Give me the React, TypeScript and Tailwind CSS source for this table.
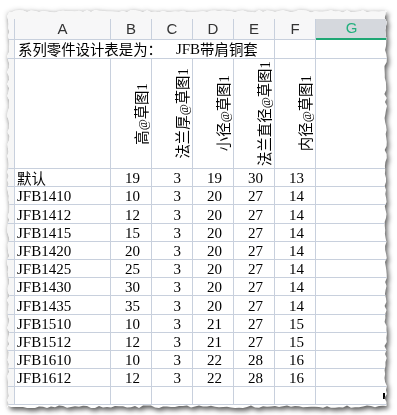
import React from "react";

const LINE = "border-[#c8d0dd]";
const mono = "font-['Liberation_Serif','Noto_Sans_CJK_SC',serif] text-[15px]";
const cjk = "font-['Noto_Sans_CJK_SC',sans-serif] text-[14.4px]";

const data: [string, number, number, number, number, number][] = [
  ["默认", 19, 3, 19, 30, 13],
  ["JFB1410", 10, 3, 20, 27, 14],
  ["JFB1412", 12, 3, 20, 27, 14],
  ["JFB1415", 15, 3, 20, 27, 14],
  ["JFB1420", 20, 3, 20, 27, 14],
  ["JFB1425", 25, 3, 20, 27, 14],
  ["JFB1430", 30, 3, 20, 27, 14],
  ["JFB1435", 35, 3, 20, 27, 14],
  ["JFB1510", 10, 3, 21, 27, 15],
  ["JFB1512", 12, 3, 21, 27, 15],
  ["JFB1610", 10, 3, 22, 28, 16],
  ["JFB1612", 12, 3, 22, 28, 16],
];

const heights = [
  "h-[18px]",
  "h-[18px]",
  "h-[19px]",
  "h-[18px]",
  "h-[18px]",
  "h-[18px]",
  "h-[18px]",
  "h-[19px]",
  "h-[18px]",
  "h-[18px]",
  "h-[18px]",
  "h-[18px]",
];

const vHeaders: [string, string][] = [
  ["高", "草图"],
  ["法兰厚", "草图"],
  ["小径", "草图"],
  ["法兰直径", "草图"],
  ["内径", "草图"],
];

function tornEdge(w: number, h: number): string {
  let seed = 11;
  const rnd = () => {
    seed = (seed * 9301 + 49297) % 233280;
    return seed / 233280;
  };
  const a = 2.6;
  const pts: string[] = [];
  for (let x = 0; x <= w; x += 4) pts.push(`${x}px ${(rnd() * a).toFixed(1)}px`);
  for (let y = 0; y <= h; y += 4) pts.push(`${(w - rnd() * a).toFixed(1)}px ${y}px`);
  for (let x = w; x >= 0; x -= 4) pts.push(`${x}px ${(h - rnd() * a).toFixed(1)}px`);
  for (let y = h; y >= 0; y -= 4) pts.push(`${(rnd() * a).toFixed(1)}px ${y}px`);
  return `polygon(${pts.join(",")})`;
}

const CLIP = tornEdge(380, 398);

function RowHead() {
  return <div className={`w-[8px] shrink-0 border-r ${LINE} bg-[#f6f6f6]`} />;
}

function VText({ a, b }: { a: string; b: string }) {
  return (
    <span className="[writing-mode:vertical-rl] [text-orientation:sideways] rotate-180 leading-none whitespace-nowrap text-black">
      <span className={cjk}>{a}</span>
      <span className="font-['Liberation_Serif',serif] text-[12px]">@</span>
      <span className={cjk}>{b}</span>
      <span className={mono}>1</span>
    </span>
  );
}

export default function App() {
  return (
    <div className="w-[397px] h-[415px] bg-white pt-[10px] pl-[7px] overflow-hidden">
      <div className="w-[380px] h-[398px] [filter:drop-shadow(2px_3px_2.5px_rgba(0,0,0,0.6))_drop-shadow(-1px_-1px_2px_rgba(0,0,0,0.12))]">
        <div className="w-[380px] h-[398px] bg-white overflow-hidden" style={{ clipPath: CLIP }}>
          {/* top strip */}
          <div className="h-[9px] bg-[#f7f7f7]" />
          {/* column header */}
          <div className={`flex h-[21px] bg-[#f7f7f8] font-['Liberation_Sans',sans-serif] text-[15px] text-[#333]`}>
            <div className={`w-[8px] shrink-0 border-r border-b ${LINE}`} />
            <div className={`w-[96px] shrink-0 border-r border-b ${LINE} flex items-center justify-center`}>A</div>
            {["B", "C", "D", "E", "F"].map((c) => (
              <div key={c} className={`w-[41px] shrink-0 border-r border-b ${LINE} flex items-center justify-center`}>
                {c}
              </div>
            ))}
            <div className="flex-1 bg-[#d5d8dd] border-b-2 border-[#1fa774] flex items-center justify-center text-[#22b07d]">
              G
            </div>
          </div>
          {/* title row */}
          <div className={`flex h-[19px] border-b ${LINE}`}>
            <RowHead />
            <div className={`w-[260px] shrink-0 border-r ${LINE} flex items-center pl-[3px] leading-none text-black whitespace-nowrap`}>
              <span className={cjk}>系列零件设计表是为：</span>
              <span className={`${mono} ml-[14px]`}>JFB</span>
              <span className={cjk}>带肩铜套</span>
            </div>
            <div className={`w-[41px] shrink-0 border-r ${LINE}`} />
            <div className="flex-1" />
          </div>
          {/* vertical header row */}
          <div className={`flex h-[110px] border-b ${LINE}`}>
            <RowHead />
            <div className={`w-[96px] shrink-0 border-r ${LINE}`} />
            {vHeaders.map(([a, b], i) => (
              <div key={i} className={`w-[41px] shrink-0 border-r ${LINE} flex items-center justify-end pr-[1px]`}>
                <VText a={a} b={b} />
              </div>
            ))}
            <div className="flex-1" />
          </div>
          {/* data rows */}
          {data.map((r, i) => (
            <div key={i} className={`flex ${heights[i]} border-b ${LINE} text-black leading-none`}>
              <RowHead />
              <div className={`w-[96px] shrink-0 border-r ${LINE} flex items-center pl-[2px] pt-[2px]`}>
                <span className={r[0] === "默认" ? cjk : mono}>{r[0]}</span>
              </div>
              {r.slice(1).map((v, j) => (
                <div key={j} className={`w-[41px] shrink-0 border-r ${LINE} flex items-center justify-end pr-[11px] pt-[2px] ${mono}`}>
                  {v}
                </div>
              ))}
              <div className="flex-1" />
            </div>
          ))}
          {/* empty row */}
          <div className={`flex h-[18px] border-b ${LINE}`}>
            <RowHead />
            <div className={`w-[96px] shrink-0 border-r ${LINE}`} />
            {[0, 1, 2, 3, 4].map((k) => (
              <div key={k} className={`w-[41px] shrink-0 border-r ${LINE}`} />
            ))}
            <div className="flex-1 flex justify-end items-center">
              <div className="w-[2px] h-[6px] bg-black mr-[2px]" />
            </div>
          </div>
        </div>
      </div>
    </div>
  );
}
